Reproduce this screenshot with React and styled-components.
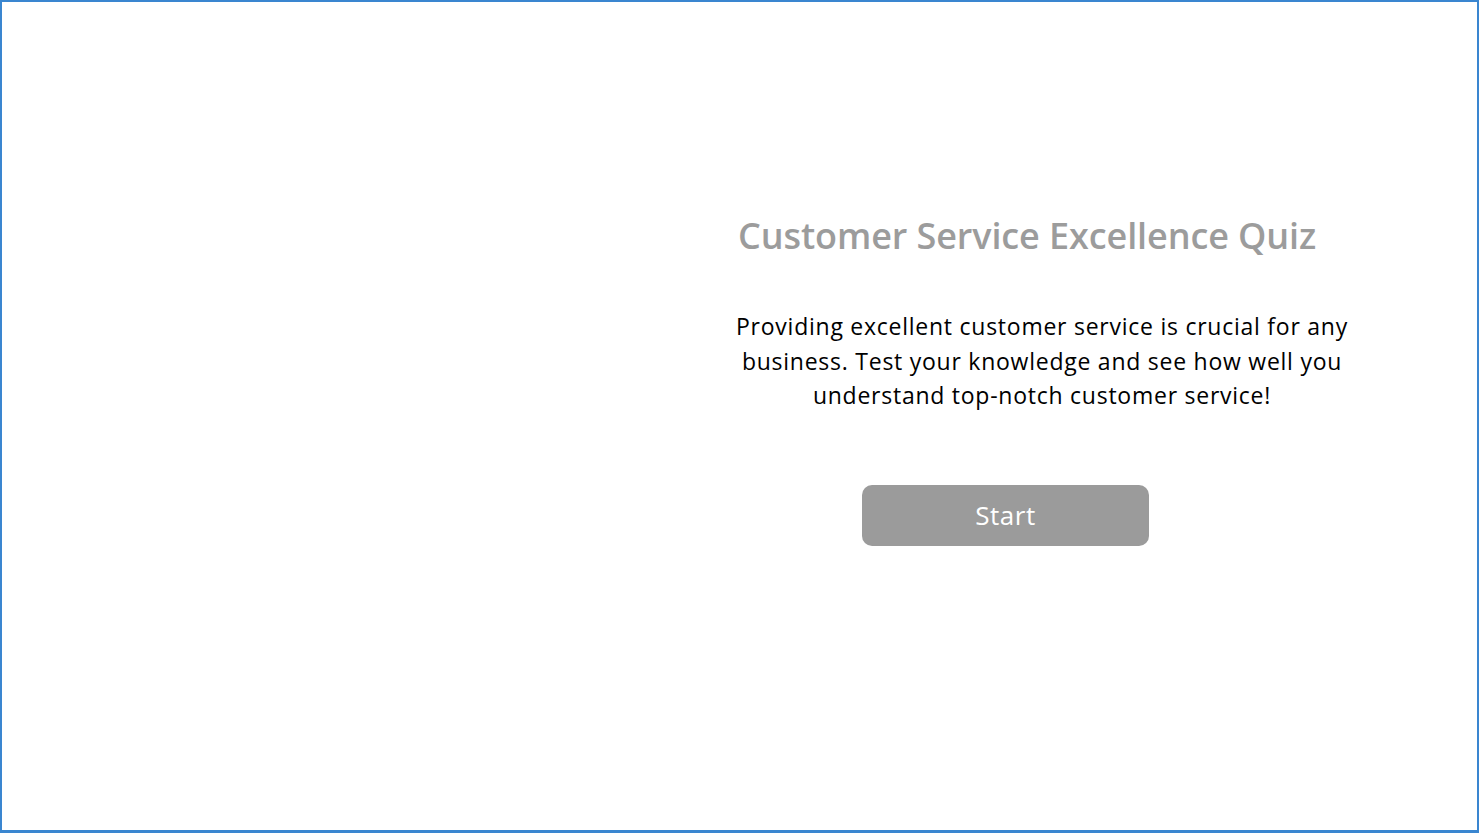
import React from "react";
import styled, { createGlobalStyle } from "styled-components";

const Global = createGlobalStyle`
  html, body { margin: 0; padding: 0; background: #ffffff; }
  body { font-family: "Open Sans", "Liberation Sans", sans-serif; }
  * { box-sizing: border-box; }
`;

const Frame = styled.div`
  width: 1479px;
  height: 833px;
  border: 2px solid #3a86d0;
  border-bottom-width: 3px;
  background: #ffffff;
  display: flex;
  overflow: hidden;
`;

const MediaPane = styled.div`
  width: 734px;
  flex: none;
`;

const ContentPane = styled.div`
  flex: 1;
  display: flex;
  flex-direction: column;
  padding-top: 210px;
`;

const Title = styled.h1`
  margin: 0 0 0 2px;
  font-size: 36px;
  font-weight: 600;
  line-height: 48px;
  color: #9c9c9c;
  letter-spacing: -0.1px;
`;

const Intro = styled.p`
  margin: 49px 0 0 -4px;
  width: 620px;
  text-align: center;
  font-size: 23px;
  line-height: 34.5px;
  letter-spacing: 0.75px;
  color: #000000;
`;

const StartButton = styled.button`
  margin: 72px 0 0 126px;
  width: 287px;
  height: 61px;
  border: none;
  border-radius: 10px;
  background: #9b9b9b;
  color: #ffffff;
  font-family: inherit;
  font-size: 26px;
  font-weight: 500;
  letter-spacing: 0.5px;
  cursor: pointer;
`;

export default function App() {
  return (
    <>
      <Global />
      <Frame>
        <MediaPane />
        <ContentPane>
          <Title>Customer Service Excellence Quiz</Title>
          <Intro>
            Providing excellent customer service is crucial for any business. Test your knowledge and see how well you understand top-notch customer service!
          </Intro>
          <StartButton>Start</StartButton>
        </ContentPane>
      </Frame>
    </>
  );
}
